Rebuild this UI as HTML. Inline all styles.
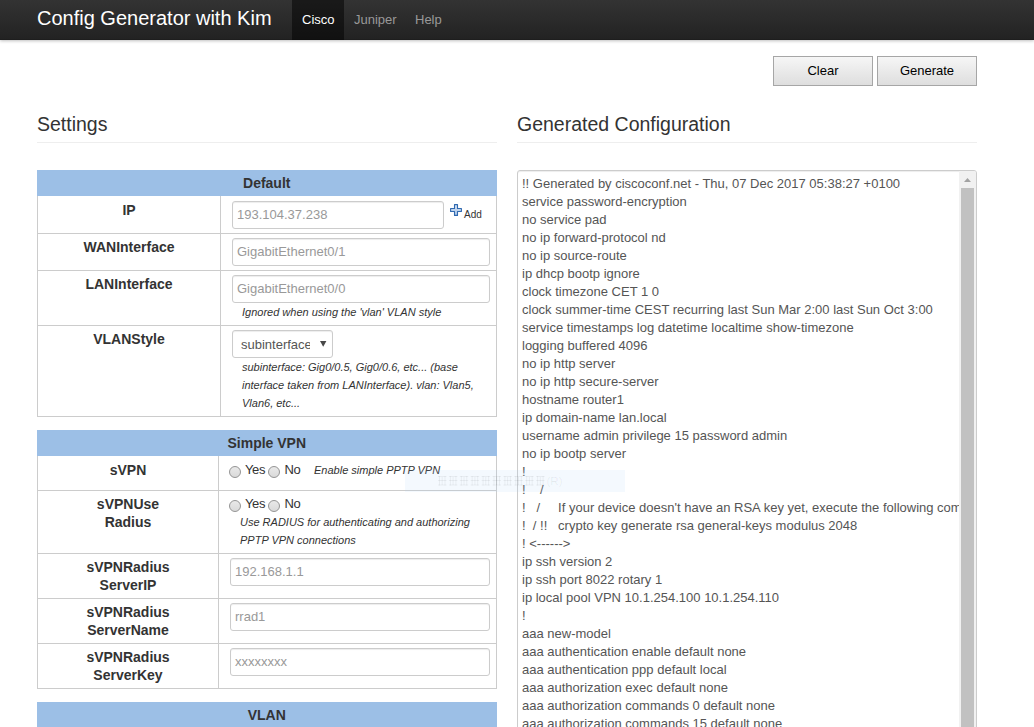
<!DOCTYPE html>
<html><head><meta charset="utf-8"><title>Config Generator</title>
<style>
*{box-sizing:border-box;margin:0;padding:0}
html,body{width:1034px;height:727px;overflow:hidden;background:#fff}
body{font-family:"Liberation Sans",sans-serif;font-size:13px;line-height:18px;color:#333;position:relative}
div,span,i,b{position:absolute;white-space:nowrap}
.nav{left:0;top:0;width:1034px;height:40px;background:linear-gradient(#333,#222);box-shadow:0 1px 3px rgba(0,0,0,.25),inset 0 -1px 0 rgba(0,0,0,.1)}
.brand{left:37px;top:8px;line-height:20px;font-size:20px;color:#fff}
.nl{top:10px;line-height:19px;font-size:13px;color:#999}
.act{left:292px;top:0;width:52px;height:40px;background:rgba(0,0,0,.5)}
.btn{top:56px;width:100px;height:30px;border:1px solid #a6a6a6;background:linear-gradient(#f6f6f6,#dedede);font-size:13px;color:#000;text-align:center;line-height:28px}
.lg{top:106px;font-size:19.5px;color:#333;line-height:36px}
.hr{top:142px;height:1px;background:#eee;width:460px}
.th{left:37px;width:459.5px;height:26px;background:#9cbfe6;text-align:center;font-weight:bold;font-size:14px;line-height:26px;color:#333}
.box{left:37px;width:460px;border:1px solid #ccc;border-top:0}
.hl{left:37px;width:460px;height:1px;background:#ccc}
.vl{width:1px;background:#ccc}
.lb{left:38px;text-align:center;font-weight:bold;font-size:14px;line-height:18px;color:#333}
.in{height:28px;border:1px solid #ccc;border-radius:3px;box-shadow:inset 0 1px 1px rgba(0,0,0,.075);color:#999;font-size:13px;line-height:26px;padding-left:4px;background:#fff;overflow:hidden}
.hint{font-style:italic;font-size:11px;color:#333;line-height:18px}
.rd{width:12px;height:12px;border-radius:50%;border:1px solid #949494;background:linear-gradient(#e9e9e9,#dadada)}
.tx{font-size:13px;line-height:18px;color:#333;letter-spacing:-.4px}
.ta{left:517px;top:170px;width:460px;height:600px;border:1px solid #ccc;border-radius:3px;box-shadow:inset 0 1px 1px rgba(0,0,0,.075);overflow:hidden}
.ta pre{font-family:"Liberation Sans",sans-serif;font-size:13px;line-height:18px;color:#555;position:absolute;left:4px;top:4px;width:437px;overflow:hidden;white-space:pre}
.sb{left:441px;top:0;width:17px;height:600px;background:#f1f1f1}
.th2{left:2px;top:17px;width:13px;height:600px;background:#c1c1c1}
.ghost{left:405px;top:470px;width:220px;height:22px;background:rgba(170,205,245,.13)}
</style></head><body>
<div class="nav"><div class="brand">Config Generator with Kim</div><div class="act"></div>
<div class="nl" style="left:302px;color:#fff">Cisco</div><div class="nl" style="left:354px">Juniper</div><div class="nl" style="left:415px">Help</div></div>
<div class="btn" style="left:773px">Clear</div><div class="btn" style="left:877px">Generate</div>
<div class="lg" style="left:37px">Settings</div><div class="hr" style="left:37px"></div>
<div class="lg" style="left:517px">Generated Configuration</div><div class="hr" style="left:517px"></div>
<div class="th" style="top:170px">Default</div>
<div class="box" style="top:196px;height:221px"></div>
<div class="vl" style="left:220px;top:196px;height:220px"></div>
<div class="hl" style="top:233px"></div>
<div class="lb" style="top:201px;width:182px;white-space:normal">IP</div>
<div class="in" style="left:232px;top:201px;width:212px">193.104.37.238</div><svg style="position:absolute;left:450px;top:204px" width="12" height="12" viewBox="0 0 12 12"><defs><linearGradient id="pg" x1="0" y1="0" x2="0" y2="1"><stop offset="0" stop-color="#d6e4f5"/><stop offset="1" stop-color="#a9c4e6"/></linearGradient></defs><path d="M4.5 .6h3v3.9h3.9v3h-3.9v3.9h-3v-3.9h-3.9v-3h3.9z" fill="url(#pg)" stroke="#3069b0" stroke-width="1.1" stroke-linejoin="round"/></svg><div style="left:464px;top:208px;font-size:10px;line-height:14px;color:#333">Add</div>
<div class="hl" style="top:270px"></div>
<div class="lb" style="top:238px;width:182px;white-space:normal">WANInterface</div>
<div class="in" style="left:232px;top:238px;width:258px">GigabitEthernet0/1</div>
<div class="hl" style="top:325px"></div>
<div class="lb" style="top:275px;width:182px;white-space:normal">LANInterface</div>
<div class="in" style="left:232px;top:275px;width:258px">GigabitEthernet0/0</div><div class="hint" style="left:242px;top:303px">Ignored when using the 'vlan' VLAN style</div>
<div class="lb" style="top:330px;width:182px;white-space:normal">VLANStyle</div>
<div class="in" style="left:232px;top:330px;width:101px;color:#555;padding-left:8px"><span style="left:8px;top:1px;width:68.5px;overflow:hidden;height:26px;line-height:26px">subinterface</span></div><svg style="position:absolute;left:320px;top:341px" width="7" height="6" viewBox="0 0 7 6"><path d="M0 0h6.4L3.2 5.8z" fill="#484848"/></svg><div class="hint" style="left:242px;top:358px">subinterface: Gig0/0.5, Gig0/0.6, etc... (base<br>interface taken from LANInterface). vlan: Vlan5,<br>Vlan6, etc...</div>
<div class="th" style="top:430px">Simple VPN</div>
<div class="box" style="top:456px;height:233px"></div>
<div class="vl" style="left:218px;top:456px;height:232px"></div>
<div class="hl" style="top:490px"></div>
<div class="lb" style="top:461px;width:180px;white-space:normal">sVPN</div>
<div class="rd" style="left:229px;top:466px"></div><div class="tx" style="left:245px;top:461px">Yes</div><div class="rd" style="left:268px;top:466px"></div><div class="tx" style="left:284.5px;top:461px">No</div><div class="hint" style="left:314px;top:461px">Enable simple PPTP VPN</div>
<div class="hl" style="top:553px"></div>
<div class="lb" style="top:495px;width:180px;white-space:normal">sVPNUse<br>Radius</div>
<div class="rd" style="left:229px;top:500px"></div><div class="tx" style="left:245px;top:495px">Yes</div><div class="rd" style="left:268px;top:500px"></div><div class="tx" style="left:284.5px;top:495px">No</div><div class="hint" style="left:240px;top:513px">Use RADIUS for authenticating and authorizing<br>PPTP VPN connections</div>
<div class="hl" style="top:598px"></div>
<div class="lb" style="top:558px;width:180px;white-space:normal">sVPNRadius<br>ServerIP</div>
<div class="in" style="left:230px;top:558px;width:260px">192.168.1.1</div>
<div class="hl" style="top:643px"></div>
<div class="lb" style="top:603px;width:180px;white-space:normal">sVPNRadius<br>ServerName</div>
<div class="in" style="left:230px;top:603px;width:260px">rrad1</div>
<div class="lb" style="top:648px;width:180px;white-space:normal">sVPNRadius<br>ServerKey</div>
<div class="in" style="left:230px;top:648px;width:260px">xxxxxxxx</div>
<div class="th" style="top:702px">VLAN</div>
<div class="ta"><pre>!! Generated by ciscoconf.net - Thu, 07 Dec 2017 05:38:27 +0100
service password-encryption
no service pad
no ip forward-protocol nd
no ip source-route
ip dhcp bootp ignore
clock timezone CET 1 0
clock summer-time CEST recurring last Sun Mar 2:00 last Sun Oct 3:00
service timestamps log datetime localtime show-timezone
logging buffered 4096
no ip http server
no ip http secure-server
hostname router1
ip domain-name lan.local
username admin privilege 15 password admin
no ip bootp server
!
!    /
!   /     If your device doesn't have an RSA key yet, execute the following command
!  / !!   crypto key generate rsa general-keys modulus 2048
! &lt;------&gt;
ip ssh version 2
ip ssh port 8022 rotary 1
ip local pool VPN 10.1.254.100 10.1.254.110
!
aaa new-model
aaa authentication enable default none
aaa authentication ppp default local
aaa authorization exec default none
aaa authorization commands 0 default none
aaa authorization commands 15 default none
aaa authorization network default local</pre><div class="sb"><svg style="position:absolute;left:5px;top:7px" width="7" height="4" viewBox="0 0 7 4"><path d="M0 4h7L3.5 0z" fill="#a3a3a3"/></svg><div class="th2"></div></div></div>
<div class="ghost"></div>
<svg style="position:absolute;left:437px;top:475px" width="126" height="12" viewBox="0 0 126 12"><g stroke="#000" stroke-opacity=".05" stroke-width="1" fill="none"><path d="M1.0 1.5h8.5M1.0 5.5h8.5M1.0 10h8.5M2.5 1v9.5M8.0 1v9.5M5.2 2v8"/><path d="M11.9 1.5h8.5M11.9 5.5h8.5M11.9 10h8.5M13.4 1v9.5M18.9 1v9.5M16.1 2v8"/><path d="M22.8 1.5h8.5M22.8 5.5h8.5M22.8 10h8.5M24.3 1v9.5M29.8 1v9.5M27.0 2v8"/><path d="M33.7 1.5h8.5M33.7 5.5h8.5M33.7 10h8.5M35.2 1v9.5M40.7 1v9.5M37.9 2v8"/><path d="M44.6 1.5h8.5M44.6 5.5h8.5M44.6 10h8.5M46.1 1v9.5M51.6 1v9.5M48.8 2v8"/><path d="M55.5 1.5h8.5M55.5 5.5h8.5M55.5 10h8.5M57.0 1v9.5M62.5 1v9.5M59.7 2v8"/><path d="M66.4 1.5h8.5M66.4 5.5h8.5M66.4 10h8.5M67.9 1v9.5M73.4 1v9.5M70.6 2v8"/><path d="M77.3 1.5h8.5M77.3 5.5h8.5M77.3 10h8.5M78.8 1v9.5M84.3 1v9.5M81.5 2v8"/><path d="M88.2 1.5h8.5M88.2 5.5h8.5M88.2 10h8.5M89.7 1v9.5M95.2 1v9.5M92.4 2v8"/><path d="M99.1 1.5h8.5M99.1 5.5h8.5M99.1 10h8.5M100.6 1v9.5M106.1 1v9.5M103.3 2v8"/></g><text x="109.5" y="10" font-family="Liberation Sans" font-size="11.5" fill="#000" fill-opacity=".07">(R)</text></svg>
</body></html>
